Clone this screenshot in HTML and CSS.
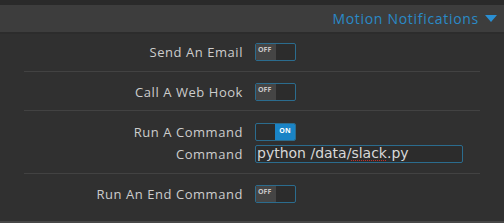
FILE: index.html
```html
<!DOCTYPE html>
<html>
<head>
<meta charset="utf-8">
<link rel="stylesheet" href="styles.css">
</head>
<body>
<div class="page">
  <div class="topstrip"></div>
  <div class="header">
    <span class="title">Motion Notifications</span>
    <svg class="caret" width="12" height="8" viewBox="0 0 12 8"><polygon points="0,0 12,0 6,7" fill="#2a8fd3"/></svg>
  </div>
  <div class="content">
    <div class="section s1">
      <div class="row">
        <span class="label">Send An Email</span>
        <div class="toggle off"><span class="knob">OFF</span></div>
      </div>
    </div>
    <div class="divider"></div>
    <div class="section s2">
      <div class="row">
        <span class="label">Call A Web Hook</span>
        <div class="toggle off"><span class="knob">OFF</span></div>
      </div>
    </div>
    <div class="divider"></div>
    <div class="section s3">
      <div class="row">
        <span class="label">Run A Command</span>
        <div class="toggle on"><span class="blank"></span><span class="knob">ON</span></div>
      </div>
      <div class="row">
        <span class="label">Command</span>
        <div class="input">python /data/<span class="spell">slack</span>.py</div>
      </div>
    </div>
    <div class="divider"></div>
    <div class="section s4">
      <div class="row">
        <span class="label">Run An End Command</span>
        <div class="toggle off"><span class="knob">OFF</span></div>
      </div>
    </div>
  </div>
  <div class="bottomstrip"></div>
</div>
</body>
</html>
```
FILE: styles.css
```css
html, body {
  margin: 0;
  padding: 0;
  background: #303030;
}
.page {
  width: 504px;
  height: 223px;
  display: flex;
  flex-direction: column;
  font-family: "Open Sans", "DejaVu Sans", sans-serif;
  color: #cfcfcf;
  overflow: hidden;
}
.topstrip {
  height: 5px;
  background: #2a2a2a;
}
.header {
  height: 27px;
  background: #3d3d3d;
  display: flex;
  justify-content: flex-end;
  align-items: center;
  gap: 6px;
  padding-right: 7px;
  border-bottom: 2px solid #2c2c2c;
}
.title {
  color: #2a8ac8;
  font-size: 14px;
  letter-spacing: 0.7px;
}
.caret {
  display: block;
  margin-top: 1px;
}
.content {
  flex: 1;
  display: flex;
  flex-direction: column;
}
.section {
  display: flex;
  flex-direction: column;
  gap: 4px;
}
.s1 { padding: 9px 0 10px; }
.s2 { padding: 11px 0 9px; }
.s3 { padding: 12px 0 10px; }
.s4 { padding: 11px 0 0; flex: 1; }
.divider {
  height: 1px;
  margin: 0 24px;
  background: #424242;
}
.row {
  display: grid;
  grid-template-columns: 243px auto;
  column-gap: 12px;
  align-items: center;
  height: 18px;
}
.label {
  text-align: right;
  font-size: 13px;
  letter-spacing: 0.55px;
  color: #cdcdcd;
}
.toggle {
  width: 39px;
  height: 16px;
  border: 1px solid #2b6c8e;
  border-radius: 2px;
  background: #2c2c2c;
  display: flex;
  overflow: hidden;
}
.toggle .knob {
  width: 20px;
  font-size: 7px;
  font-weight: bold;
  line-height: 12px;
  padding-left: 2px;
  box-sizing: border-box;
}
.toggle.off .knob {
  background: #454545;
  color: #c8c8c8;
}
.toggle.on .blank {
  width: 19px;
}
.toggle.on .knob {
  background: #1a84c6;
  color: #ffffff;
  width: 20px;
  text-align: center;
  padding-left: 0;
  line-height: 14px;
}
.input {
  width: 205px;
  height: 16px;
  border: 1px solid #2b6c8e;
  border-radius: 2px;
  background: #2c2c2c;
  font-family: "DejaVu Sans", sans-serif;
  font-size: 14px;
  line-height: 15px;
  padding-left: 1px;
  color: #d8d8d8;
  white-space: nowrap;
}
.spell {
  text-decoration: underline dotted #c0302a;
  text-decoration-thickness: 1px;
  text-underline-offset: 2px;
}
.bottomstrip {
  height: 2px;
  background: #474747;
}
```
